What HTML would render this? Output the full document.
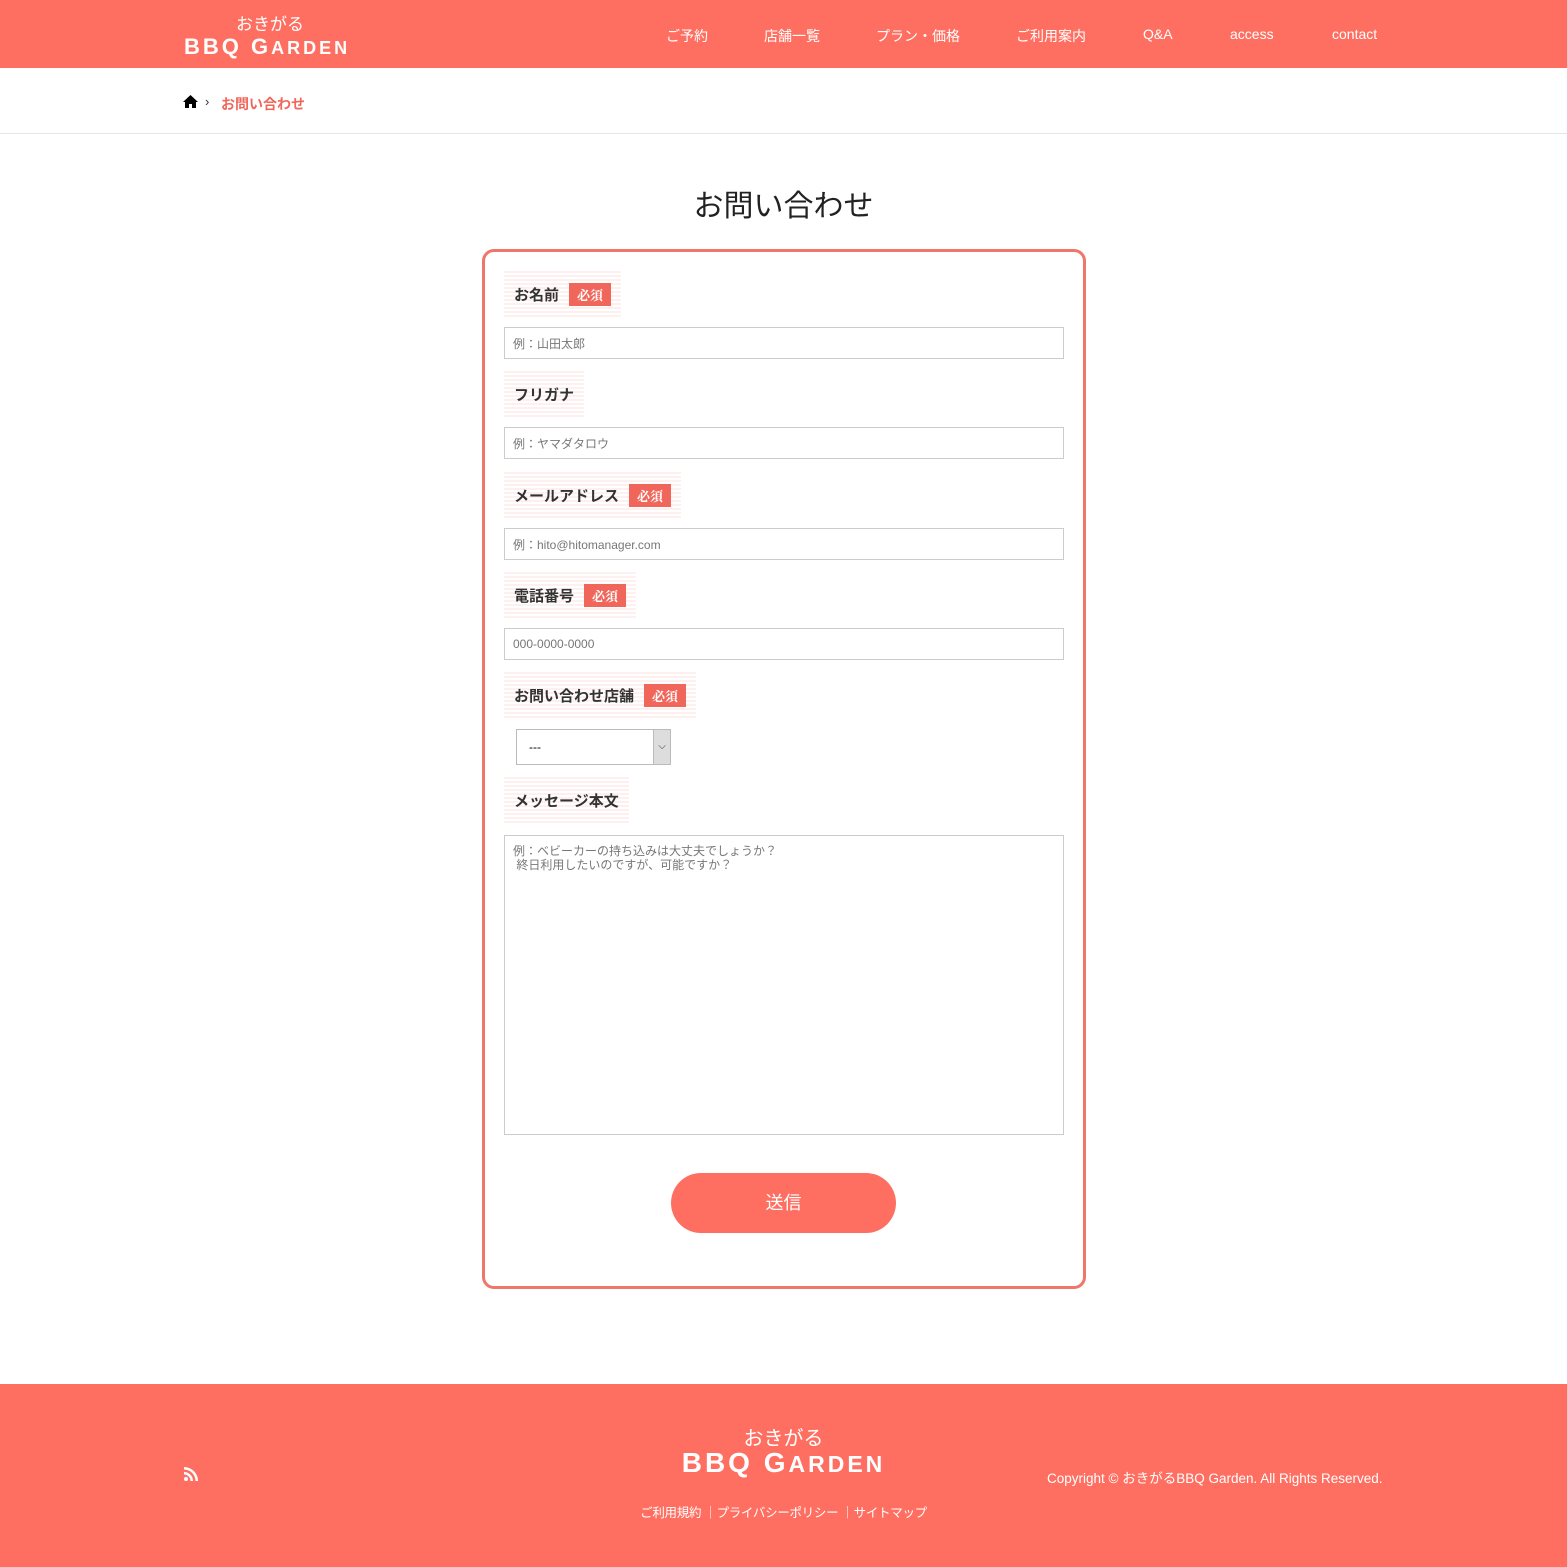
<!DOCTYPE html>
<html><head><meta charset="utf-8"><style>
*{box-sizing:border-box;margin:0;padding:0}
body{width:1567px;height:1567px;position:relative;background:#fff;font-family:"Liberation Sans","Noto Sans CJK JP",sans-serif;color:#333;overflow:hidden}
.abs{position:absolute}
.hdr{left:0;top:0;width:1567px;height:68px;background:#ff6f61}
.nav{top:26px;color:#fff;font-size:14px}
.logo-s{color:#fff;text-align:center;line-height:1}
.lbl{position:absolute;left:504px;height:46px;padding:0 10px;display:flex;align-items:center;font-weight:bold;font-size:15px;color:#333;background:repeating-linear-gradient(#fdf0ee 0 2px,#fff 2px 4px)}
.req{background:#f0665a;color:#fff;font-size:13px;padding:2px 8px;margin-left:10px;font-family:"Noto Serif CJK SC",serif;font-weight:bold}
.inp{position:absolute;left:504px;width:560px;height:32px;border:1px solid #ccc;font-size:12px;color:#777;padding:0 8px;display:flex;align-items:center}
</style></head><body>
<div class="abs hdr"></div>
<div class="abs logo-s" style="left:236px;top:16px;font-size:17px">おきがる</div>
<div class="abs" style="left:184px;top:34px;color:#fff;font-weight:bold;font-size:22px;letter-spacing:3px;white-space:nowrap">BBQ G<span style="font-size:18px">ARDEN</span></div>
<div class="abs nav" style="left:666px">ご予約</div>
<div class="abs nav" style="left:764px">店舗一覧</div>
<div class="abs nav" style="left:876px">プラン・価格</div>
<div class="abs nav" style="left:1016px">ご利用案内</div>
<div class="abs nav" style="left:1143px">Q&amp;A</div>
<div class="abs nav" style="left:1230px">access</div>
<div class="abs nav" style="left:1332px">contact</div>
<svg class="abs" style="left:183px;top:95px" width="15" height="13" viewBox="0 0 15 13"><path d="M7.5 0L0 7h2v6h4V9h3v4h4V7h2z" fill="#000"/></svg>
<div class="abs" style="left:205px;top:94px;font-size:13px;color:#333">›</div>
<div class="abs" style="left:221px;top:94px;font-size:14px;color:#f0665a;font-weight:bold">お問い合わせ</div>
<div class="abs" style="left:0;top:133px;width:1567px;height:1px;background:#e5e5e5"></div>
<div class="abs" style="left:0;top:181px;width:1567px;text-align:center;font-size:30px;color:#222">お問い合わせ</div>
<div class="abs" style="left:482px;top:249px;width:604px;height:1040px;border:3px solid #f0766a;border-radius:12px"></div>
<div class="lbl" style="top:271px">お名前<span class="req">必須</span></div>
<div class="inp" style="top:327px">例：山田太郎</div>
<div class="lbl" style="top:371px">フリガナ</div>
<div class="inp" style="top:427px">例：ヤマダタロウ</div>
<div class="lbl" style="top:472px">メールアドレス<span class="req">必須</span></div>
<div class="inp" style="top:528px">例：hito@hitomanager.com</div>
<div class="lbl" style="top:572px">電話番号<span class="req">必須</span></div>
<div class="inp" style="top:628px">000-0000-0000</div>
<div class="lbl" style="top:672px">お問い合わせ店舗<span class="req">必須</span></div>
<div class="abs" style="left:516px;top:729px;width:155px;height:36px;border:1px solid #bbb;font-size:12px;color:#000;padding:10px 12px">---</div>
<div class="abs" style="left:653px;top:730px;width:17px;height:34px;background:#ddd;border-left:1px solid #bbb;font-size:10px;text-align:center;line-height:34px;color:#333">⌵</div>
<div class="lbl" style="top:777px">メッセージ本文</div>
<div class="abs" style="left:504px;top:835px;width:560px;height:300px;border:1px solid #ccc;font-size:12px;color:#777;padding:8px;line-height:14px">例：ベビーカーの持ち込みは大丈夫でしょうか？<br>&nbsp;終日利用したいのですが、可能ですか？</div>
<div class="abs" style="left:671px;top:1173px;width:225px;height:60px;border-radius:30px;background:#ff6f61;color:#fff;font-size:18px;text-align:center;line-height:60px">送信</div>
<div class="abs" style="left:0;top:1384px;width:1567px;height:183px;background:#ff6f61"></div>
<svg class="abs" style="left:184px;top:1467px" width="14" height="14" viewBox="0 0 14 14"><circle cx="2" cy="12" r="2" fill="#fff"/><path d="M0 5a9 9 0 0 1 9 9H6.5A6.5 6.5 0 0 0 0 7.5z M0 0a14 14 0 0 1 14 14h-2.5A11.5 11.5 0 0 0 0 2.5z" fill="#fff"/></svg>
<div class="abs logo-s" style="left:0;width:1567px;top:1429px;font-size:20px">おきがる</div>
<div class="abs" style="left:0;width:1567px;top:1447px;text-align:center;color:#fff;font-weight:bold;font-size:28px;letter-spacing:3px;white-space:nowrap">BBQ G<span style="font-size:23px">ARDEN</span></div>
<div class="abs" style="left:0;width:1567px;top:1502px;text-align:center;color:#fff;font-size:12.5px;letter-spacing:-0.3px">ご利用規約 ｜プライバシーポリシー ｜サイトマップ</div>
<div class="abs" style="left:1047px;top:1467px;color:#fff;font-size:13.5px">Copyright © おきがるBBQ Garden. All Rights Reserved.</div>
</body></html>
